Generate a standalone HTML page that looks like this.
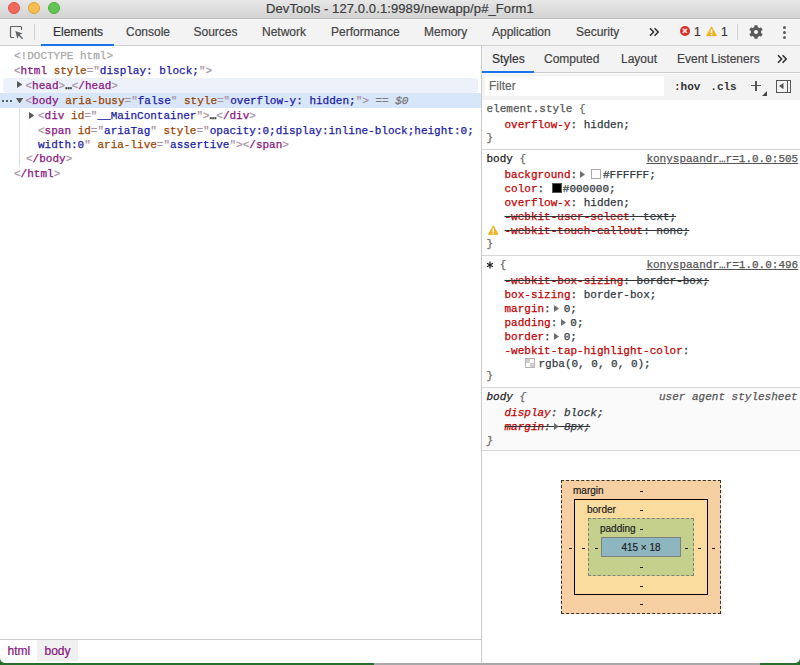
<!DOCTYPE html>
<html><head><meta charset="utf-8">
<style>
*{margin:0;padding:0;box-sizing:border-box}
html,body{width:800px;height:665px;overflow:hidden;background:#fff}
body{position:relative;font-family:"Liberation Sans",sans-serif}
.a{position:absolute}
.m{font-family:"Liberation Mono",monospace;font-size:11px;line-height:14px;white-space:pre;position:absolute;-webkit-text-stroke:0.25px currentColor}
.s{font-family:"Liberation Sans",sans-serif;white-space:pre;position:absolute;-webkit-text-stroke:0.2px currentColor}
/* dom colors */
.tg{color:#881280}.br{color:#a894a6}.an{color:#994500}.av{color:#1a1aa6}
.pn{color:#c20000}.pv{color:#303942}
.strike{text-decoration:line-through}
</style></head><body>
<!-- bottom strip -->
<div class="a" style="left:0;top:655px;width:374px;height:10px;background:#2a6e2e"></div>
<div class="a" style="left:374px;top:655px;width:386px;height:10px;background:#a9a9a9"></div>
<div class="a" style="left:760px;top:655px;width:40px;height:10px;background:#2a6e2e"></div>
<div class="a" style="left:0;top:0;width:800px;height:663px;background:#fff;border-radius:0 0 5px 5px;overflow:hidden">

<!-- title bar -->
<div class="a" style="left:0;top:0;width:800px;height:19px;background:linear-gradient(#e7e7e7,#d3d3d3);border-bottom:1px solid #bcbcbc"></div>
<div class="a" style="left:8px;top:2px;width:12px;height:12px;border-radius:50%;background:#ee6a5f;border:0.5px solid #e0504a"></div>
<div class="a" style="left:28px;top:2px;width:12px;height:12px;border-radius:50%;background:#f5be4f;border:0.5px solid #dea236"></div>
<div class="a" style="left:48px;top:2px;width:12px;height:12px;border-radius:50%;background:#62c454;border:0.5px solid #52a940"></div>
<div class="s" style="left:266px;top:1px;font-size:13px;line-height:16px;color:#3c3c3c;letter-spacing:0.1px">DevTools - 127.0.0.1:9989/newapp/p#_Form1</div>

<!-- main toolbar -->
<div class="a" style="left:0;top:19px;width:800px;height:27px;background:#f3f3f3;border-bottom:1px solid #d0d0d0"></div>
<svg class="a" style="left:9px;top:25px" width="16" height="16" viewBox="0 0 16 16">
 <path d="M5 12.5H2.5a1 1 0 0 1-1-1V2.5a1 1 0 0 1 1-1h9a1 1 0 0 1 1 1V5" fill="none" stroke="#5f6368" stroke-width="1.2"/>
 <path d="M6.3 6L13.6 8.4 10.6 9.8 14.1 13.3 13.1 14.3 9.7 10.8 8.4 13.9z" fill="#5f6368"/>
</svg>
<div class="a" style="left:34px;top:24px;width:1px;height:16px;background:#d0d0d0"></div>
<div class="a" style="left:41px;top:44px;width:73px;height:2px;background:#1a73e8"></div>
<div class="s" style="left:53px;top:25px;font-size:12px;line-height:14px;color:#333">Elements</div>
<div class="s" style="left:126px;top:25px;font-size:12px;line-height:14px;color:#444">Console</div>
<div class="s" style="left:193.5px;top:25px;font-size:12px;line-height:14px;color:#444">Sources</div>
<div class="s" style="left:262px;top:25px;font-size:12px;line-height:14px;color:#444">Network</div>
<div class="s" style="left:331px;top:25px;font-size:12px;line-height:14px;color:#444">Performance</div>
<div class="s" style="left:424px;top:25px;font-size:12px;line-height:14px;color:#444">Memory</div>
<div class="s" style="left:492px;top:25px;font-size:12px;line-height:14px;color:#444">Application</div>
<div class="s" style="left:576px;top:25px;font-size:12px;line-height:14px;color:#444">Security</div>
<svg class="a" style="left:649px;top:27px" width="11" height="10" viewBox="0 0 11 10"><path d="M1 1.2L4.6 5 1 8.8M5.6 1.2L9.2 5 5.6 8.8" fill="none" stroke="#333" stroke-width="1.6"/></svg>
<div class="a" style="left:680px;top:26px;width:10px;height:10px;border-radius:50%;background:#d93025"></div>
<div class="s" style="left:680px;top:24px;width:10px;text-align:center;font-size:9px;line-height:14px;color:#fff;font-weight:bold">×</div>
<div class="s" style="left:694px;top:25px;font-size:12px;line-height:14px;color:#333">1</div>
<svg class="a" style="left:705.6px;top:26px" width="11" height="10.5" viewBox="0 0 11 10.5"><path d="M5.5 0.8L10.4 9.7H0.6z" fill="#f0b31e" stroke="#f0b31e" stroke-width="1" stroke-linejoin="round"/><rect x="4.7" y="3.3" width="1.6" height="3.8" fill="#fff"/><rect x="4.7" y="7.9" width="1.6" height="1.3" fill="#fff"/></svg>
<div class="s" style="left:721px;top:25px;font-size:12px;line-height:14px;color:#333">1</div>
<div class="a" style="left:737px;top:24px;width:1px;height:16px;background:#d0d0d0"></div>
<svg class="a" style="left:748px;top:24px" width="16" height="16" viewBox="0 0 16 16"><g fill="#5a5a5a"><circle cx="8" cy="8" r="5.2"/><rect x="6.3" y="1.2" width="3.4" height="13.6" rx="0.6"/><rect x="6.3" y="1.2" width="3.4" height="13.6" rx="0.6" transform="rotate(60 8 8)"/><rect x="6.3" y="1.2" width="3.4" height="13.6" rx="0.6" transform="rotate(120 8 8)"/></g><circle cx="8" cy="8" r="2.1" fill="#f3f3f3"/></svg>
<div class="a" style="left:783.1px;top:25.8px;width:3px;height:3px;border-radius:50%;background:#5a5a5a"></div>
<div class="a" style="left:783.1px;top:30.9px;width:3px;height:3px;border-radius:50%;background:#5a5a5a"></div>
<div class="a" style="left:783.1px;top:36px;width:3px;height:3px;border-radius:50%;background:#5f6368"></div>

<!-- ELEMENTS TREE -->
<div class="a" style="left:3px;top:78px;width:474.5px;height:15px;background:#edf2fa;border-radius:4px"></div>
<div class="a" style="left:0;top:93px;width:481px;height:15px;background:#d8e6f9"></div>
<div class="a" style="left:19px;top:108px;width:1px;height:59px;background:#d7e3f5"></div>

<div class="m" style="left:14px;top:49px;color:#a8a8a8">&lt;!DOCTYPE html&gt;</div>
<div class="m" style="left:14px;top:64px"><span class="br">&lt;</span><span class="tg">html</span> <span class="an">style</span><span class="br">="</span><span class="av">display: block;</span><span class="br">"&gt;</span></div>
<svg class="a" style="left:17px;top:81.4px" width="5.4" height="7"><path d="M0 0L5.4 3.5 0 7z" fill="#5a5a5a"/></svg>
<div class="m" style="left:25.5px;top:79px"><span class="br">&lt;</span><span class="tg">head</span><span class="br">&gt;</span><span style="color:#333;font-weight:bold;position:relative;top:-0.5px">…</span><span class="br">&lt;</span><span class="tg">/head</span><span class="br">&gt;</span></div>
<div class="a" style="left:2px;top:99.5px;width:2.4px;height:2.4px;background:#333;border-radius:50%"></div><div class="a" style="left:6px;top:99.5px;width:2.4px;height:2.4px;background:#333;border-radius:50%"></div><div class="a" style="left:10px;top:99.5px;width:2.4px;height:2.4px;background:#333;border-radius:50%"></div>
<svg class="a" style="left:15.8px;top:97.6px" width="7.2" height="5.6"><path d="M0 0H7.2L3.6 5.6z" fill="#5a5a5a"/></svg>
<div class="m" style="left:25.5px;top:94px"><span class="br">&lt;</span><span class="tg">body</span> <span class="an">aria-busy</span><span class="br">="</span><span class="av">false</span><span class="br">"</span> <span class="an">style</span><span class="br">="</span><span class="av">overflow-y: hidden;</span><span class="br">"&gt;</span> <span style="color:#7a7a7a">== <i>$0</i></span></div>
<svg class="a" style="left:29px;top:111.6px" width="5.4" height="7"><path d="M0 0L5.4 3.5 0 7z" fill="#5a5a5a"/></svg>
<div class="m" style="left:38px;top:109px"><span class="br">&lt;</span><span class="tg">div</span> <span class="an">id</span><span class="br">="</span><span class="av">__MainContainer</span><span class="br">"&gt;</span><span style="color:#333;font-weight:bold;position:relative;top:-0.5px">…</span><span class="br">&lt;</span><span class="tg">/div</span><span class="br">&gt;</span></div>
<div class="m" style="left:38px;top:124px"><span class="br">&lt;</span><span class="tg">span</span> <span class="an">id</span><span class="br">="</span><span class="av">ariaTag</span><span class="br">"</span> <span class="an">style</span><span class="br">="</span><span class="av">opacity:0;display:inline-block;height:0;</span></div>
<div class="m" style="left:38px;top:138px"><span class="av">width:0</span><span class="br">"</span> <span class="an">aria-live</span><span class="br">="</span><span class="av">assertive</span><span class="br">"&gt;</span><span class="br">&lt;</span><span class="tg">/span</span><span class="br">&gt;</span></div>
<div class="m" style="left:26px;top:152px"><span class="br">&lt;</span><span class="tg">/body</span><span class="br">&gt;</span></div>
<div class="m" style="left:14px;top:167px"><span class="br">&lt;</span><span class="tg">/html</span><span class="br">&gt;</span></div>

<!-- breadcrumbs -->
<div class="a" style="left:0;top:639px;width:481px;height:1px;background:#cbcbcb"></div>
<div class="a" style="left:37px;top:640px;width:41px;height:21px;background:#f0f0f0"></div>
<div class="s" style="left:7.5px;top:644px;font-size:12px;line-height:14px;color:#881280">html</div>
<div class="s" style="left:44.5px;top:644px;font-size:12px;line-height:14px;color:#881280">body</div>

<!-- SIDEBAR -->
<div class="a" style="left:481px;top:45px;width:1px;height:620px;background:#cbcbcb"></div>
<div class="a" style="left:482px;top:46px;width:318px;height:27px;background:#f3f3f3;border-bottom:1px solid #cbcbcb"></div>
<div class="a" style="left:482px;top:71px;width:52px;height:2px;background:#1a73e8"></div>
<div class="s" style="left:492px;top:52px;font-size:12px;line-height:14px;color:#333">Styles</div>
<div class="s" style="left:544px;top:52px;font-size:12px;line-height:14px;color:#444">Computed</div>
<div class="s" style="left:621px;top:52px;font-size:12px;line-height:14px;color:#444">Layout</div>
<div class="s" style="left:677px;top:52px;font-size:12px;line-height:14px;color:#444">Event Listeners</div>
<svg class="a" style="left:777px;top:54px" width="11" height="10" viewBox="0 0 11 10"><path d="M1 1.2L4.6 5 1 8.8M5.6 1.2L9.2 5 5.6 8.8" fill="none" stroke="#333" stroke-width="1.6"/></svg>

<div class="a" style="left:482px;top:74px;width:318px;height:26px;background:#f3f3f3"></div>
<div class="a" style="left:485px;top:76px;width:179px;height:20px;background:#fff"></div>
<div class="s" style="left:489px;top:79px;font-size:12px;line-height:14px;color:#666">Filter</div>
<div class="m" style="left:674px;top:80px;font-weight:bold;color:#333;-webkit-text-stroke:0">:hov</div>
<div class="m" style="left:710.3px;top:80px;font-weight:bold;color:#333;-webkit-text-stroke:0">.cls</div>
<div class="a" style="left:750.8px;top:85.1px;width:10.4px;height:1.4px;background:#555"></div>
<div class="a" style="left:755.2px;top:80.8px;width:1.4px;height:10px;background:#555"></div>
<svg class="a" style="left:762.3px;top:91px" width="5" height="5"><path d="M5 0V5H0z" fill="#444"/></svg>
<div class="a" style="left:776px;top:80px;width:15px;height:13px;border:1.2px solid #555"></div>
<div class="a" style="left:786.6px;top:80px;width:1.2px;height:13px;background:#555"></div>
<svg class="a" style="left:779.4px;top:83.3px" width="4.5" height="6.2"><path d="M4.5 0V6.2L0 3.1z" fill="#555"/></svg>

<!-- styles rules placeholder -->
<div id="rules">
<div class="m" style="left:486.5px;top:102px;"><span style="color:#555">element.style</span> <span style="color:#6a6a6a">{</span></div>
<div class="m" style="left:504.5px;top:118px;"><span class="pn">overflow-y</span><span class="pv">: hidden;</span></div>
<div class="m" style="left:486.5px;top:131px;"><span style="color:#6a6a6a">}</span></div>
<div class="a" style="left:482px;top:149px;width:318px;height:1px;background:#d6d6d6"></div>
<div class="m" style="left:486.5px;top:152px;"><span style="color:#222">body</span> <span style="color:#6a6a6a">{</span></div>
<div class="m" style="left:646.4px;top:152px;"><span style="color:#555;text-decoration:underline">konyspaandr…r=1.0.0:505</span></div>
<div class="m" style="left:504.5px;top:168px;"><span class="pn">background</span><span class="pv">:</span></div>
<div class="m" style="left:603px;top:168px;"><span class="pv">#FFFFFF;</span></div>
<div class="m" style="left:504.5px;top:182px;"><span class="pn">color</span><span class="pv">:</span></div>
<div class="m" style="left:562.8px;top:182px;"><span class="pv">#000000;</span></div>
<div class="m" style="left:504.5px;top:196px;"><span class="pn">overflow-x</span><span class="pv">: hidden;</span></div>
<div class="m" style="left:504.5px;top:210px;text-decoration:line-through;color:#333"><span class="pn">-webkit-user-select</span><span class="pv">: text;</span></div>
<div class="m" style="left:504.5px;top:224px;text-decoration:line-through;color:#333"><span class="pn">-webkit-touch-callout</span><span class="pv">: none;</span></div>
<div class="m" style="left:486.5px;top:237px;"><span style="color:#6a6a6a">}</span></div>
<div class="a" style="left:482px;top:255px;width:318px;height:1px;background:#d6d6d6"></div>
<div class="m" style="left:486.5px;top:258px;">  <span style="color:#6a6a6a">{</span></div>
<div class="m" style="left:646.4px;top:258px;"><span style="color:#555;text-decoration:underline">konyspaandr…r=1.0.0:496</span></div>
<div class="m" style="left:504.5px;top:274px;text-decoration:line-through;color:#333"><span class="pn">-webkit-box-sizing</span><span class="pv">: border-box;</span></div>
<div class="m" style="left:504.5px;top:288px;"><span class="pn">box-sizing</span><span class="pv">: border-box;</span></div>
<div class="m" style="left:504.5px;top:302px;"><span class="pn">margin</span><span class="pv">:</span></div>
<div class="m" style="left:563.7px;top:302px;"><span class="pv">0;</span></div>
<div class="m" style="left:504.5px;top:316px;"><span class="pn">padding</span><span class="pv">:</span></div>
<div class="m" style="left:570.3px;top:316px;"><span class="pv">0;</span></div>
<div class="m" style="left:504.5px;top:330px;"><span class="pn">border</span><span class="pv">:</span></div>
<div class="m" style="left:563.7px;top:330px;"><span class="pv">0;</span></div>
<div class="m" style="left:504.5px;top:344px;"><span class="pn">-webkit-tap-highlight-color</span><span class="pv">:</span></div>
<div class="m" style="left:538.5px;top:357px;"><span class="pv">rgba(0, 0, 0, 0);</span></div>
<div class="m" style="left:486.5px;top:369px;"><span style="color:#6a6a6a">}</span></div>
<div class="a" style="left:482px;top:387px;width:318px;height:64px;background:#fafafa;border-top:1px solid #d6d6d6;border-bottom:1px solid #d6d6d6"></div>
<div class="m" style="left:486.5px;top:390px;"><i style="color:#222">body</i> <i style="color:#6a6a6a">{</i></div>
<div class="m" style="left:659px;top:390px;"><i style="color:#555">user agent stylesheet</i></div>
<div class="m" style="left:504.5px;top:406px;"><i class="pn">display</i><i class="pv">: block;</i></div>
<div class="m" style="left:504.5px;top:420px;"><span style="text-decoration:line-through;color:#333"><i class="pn">margin</i><i class="pv">:  8px;</i></span></div>
<div class="m" style="left:486.5px;top:434px;"><i style="color:#6a6a6a">}</i></div>
<svg class="a" style="left:580px;top:171px" width="5" height="7"><path d="M0 0L5 3.5 0 7z" fill="#6e6e6e"/></svg>
<svg class="a" style="left:554px;top:305px" width="5" height="7"><path d="M0 0L5 3.5 0 7z" fill="#6e6e6e"/></svg>
<svg class="a" style="left:560.6px;top:319px" width="5" height="7"><path d="M0 0L5 3.5 0 7z" fill="#6e6e6e"/></svg>
<svg class="a" style="left:554px;top:333px" width="5" height="7"><path d="M0 0L5 3.5 0 7z" fill="#6e6e6e"/></svg>
<svg class="a" style="left:554px;top:423px" width="5" height="7"><path d="M0 0L5 3.5 0 7z" fill="#6e6e6e"/></svg>
<div class="a" style="left:591px;top:169px;width:10px;height:10px;border:1px solid #aaa;background:#fff"></div>
<div class="a" style="left:552px;top:183px;width:10px;height:10px;border:1px solid #555;background:#000"></div>
<div class="a" style="left:525px;top:358px;width:10px;height:10px;border:1px solid #b5b5b5;background:conic-gradient(#fff 0 25%,#d0d0d0 0 50%,#fff 0 75%,#d0d0d0 0)"></div>
<svg class="a" style="left:488px;top:225px" width="10.5" height="10" viewBox="0 0 10.5 10"><path d="M5.25 0.8L10 9.3H0.5z" fill="#f0b31e" stroke="#f0b31e" stroke-width="1" stroke-linejoin="round"/><rect x="4.45" y="3.2" width="1.6" height="3.6" fill="#fff"/><rect x="4.45" y="7.5" width="1.6" height="1.3" fill="#fff"/></svg>
</div>

<svg class="a" style="left:485.5px;top:260.5px" width="8" height="8" viewBox="0 0 8 8"><path d="M4 0.6V7.4M1.05 2.3L6.95 5.7M1.05 5.7L6.95 2.3" stroke="#222" stroke-width="1.3"/></svg>
<!-- box model -->
<div class="a" style="left:561px;top:480px;width:160px;height:134px;background:#f6cfa2;border:1px dashed #333"></div>
<div class="a" style="left:574px;top:499px;width:134px;height:96px;background:#fadc9e;border:1px solid #000"></div>
<div class="a" style="left:588px;top:518px;width:106px;height:58px;background:#c5d08c;border:1px dashed #808080"></div>
<div class="a" style="left:601px;top:537px;width:80px;height:20px;background:#8db6c1;border:1px solid #808080"></div>
<div class="s" style="left:573px;top:485px;font-size:10px;line-height:12px;color:#222">margin</div>
<div class="s" style="left:587px;top:504px;font-size:10px;line-height:12px;color:#222">border</div>
<div class="s" style="left:600px;top:523px;font-size:10px;line-height:12px;color:#222">padding</div>
<div class="s" style="left:601px;top:542px;width:80px;text-align:center;font-size:10px;line-height:12px;color:#222">415 × 18</div>
<div class="a" style="left:639.5px;top:490.5px;width:3px;height:1.4px;background:#222"></div>
<div class="a" style="left:639.5px;top:509.5px;width:3px;height:1.4px;background:#222"></div>
<div class="a" style="left:639.5px;top:528.5px;width:3px;height:1.4px;background:#222"></div>
<div class="a" style="left:639.5px;top:566.5px;width:3px;height:1.4px;background:#222"></div>
<div class="a" style="left:639.5px;top:585.5px;width:3px;height:1.4px;background:#222"></div>
<div class="a" style="left:639.5px;top:603.5px;width:3px;height:1.4px;background:#222"></div>
<div class="a" style="left:568.5px;top:547.5px;width:3px;height:1.4px;background:#222"></div>
<div class="a" style="left:581.5px;top:547.5px;width:3px;height:1.4px;background:#222"></div>
<div class="a" style="left:594.5px;top:547.5px;width:3px;height:1.4px;background:#222"></div>
<div class="a" style="left:684.5px;top:547.5px;width:3px;height:1.4px;background:#222"></div>
<div class="a" style="left:697.5px;top:547.5px;width:3px;height:1.4px;background:#222"></div>
<div class="a" style="left:711.5px;top:547.5px;width:3px;height:1.4px;background:#222"></div>

</div>
</body></html>
